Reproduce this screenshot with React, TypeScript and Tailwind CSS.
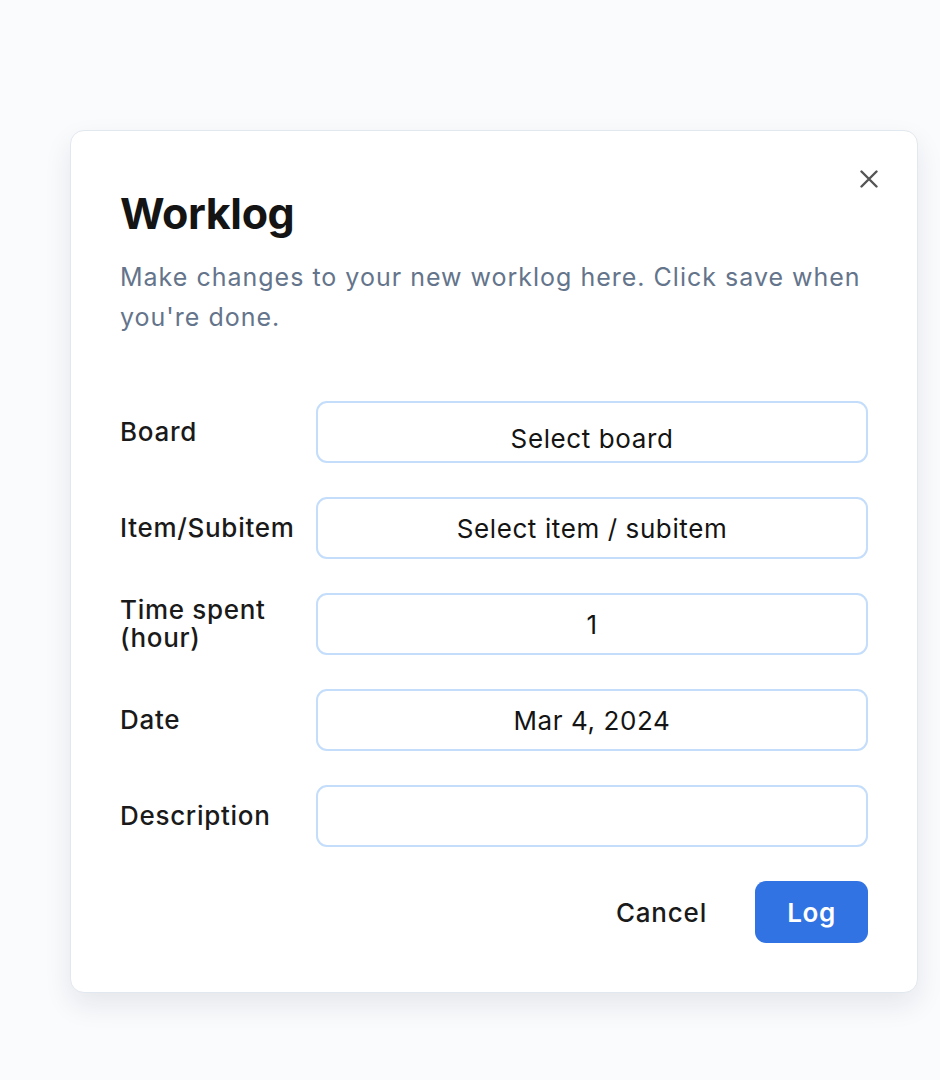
import React from "react"

const rows = [
  { label: "Board", value: "Select board", shift: true },
  { label: "Item/Subitem", value: "Select item / subitem" },
  { label: "Time spent (hour)", value: "1" },
  { label: "Date", value: "Mar 4, 2024" },
  { label: "Description", value: "" },
]

export default function App() {
  return (
    <div className="min-h-[1080px] w-full bg-[#fafbfd] pt-[130px] pl-[70px] font-['Inter',sans-serif]">
      <div className="relative w-[848px] rounded-[14px] border border-[#e2e8f0] bg-white px-[49px] pt-[57px] pb-[49px] shadow-[0_12px_28px_rgba(15,23,42,0.09)]">
        <button className="absolute right-[39px] top-[39px] text-[#555]" aria-label="Close">
          <svg width="18" height="18" viewBox="0 0 18 18" fill="none" stroke="currentColor" strokeWidth="2.4" strokeLinecap="round">
            <path d="M1.5 1.5 16.5 16.5M16.5 1.5 1.5 16.5" />
          </svg>
        </button>

        <h2 className="text-[43px] leading-[50px] font-bold tracking-[-0.4px] text-[#141414]">Worklog</h2>
        <p className="mt-[19px] text-[25px] leading-[40px] tracking-[1px] text-[#64748b]">
          Make changes to your new worklog here. Click save when you're done.
        </p>

        <div className="mt-[64px] flex flex-col gap-[34px]">
          {rows.map((row) => (
            <div key={row.label} className="grid grid-cols-[196px_1fr] items-center">
              <label className="text-[26px] leading-[28px] font-medium tracking-[0.7px] text-[#1a1a1a] pr-[8px]">{row.label}</label>
              <div
                className={
                  row.shift
                    ? "flex h-[62px] items-center justify-center rounded-[11px] border-2 border-[#c3ddfb] pt-[12px] text-[26px] tracking-[0.6px] text-[#141414]"
                    : "flex h-[62px] items-center justify-center rounded-[11px] border-2 border-[#c3ddfb] text-[26px] tracking-[0.6px] text-[#141414]"
                }
              >
                {row.value}
              </div>
            </div>
          ))}
        </div>

        <div className="mt-[34px] flex items-center justify-end gap-[32px]">
          <button className="h-[62px] px-[16px] text-[26px] font-medium tracking-[0.8px] text-[#1a1a1a]">Cancel</button>
          <button className="h-[62px] w-[113px] rounded-[11px] bg-[#3273e3] text-[26px] font-semibold tracking-[0.5px] text-white">Log</button>
        </div>
      </div>
    </div>
  )
}
